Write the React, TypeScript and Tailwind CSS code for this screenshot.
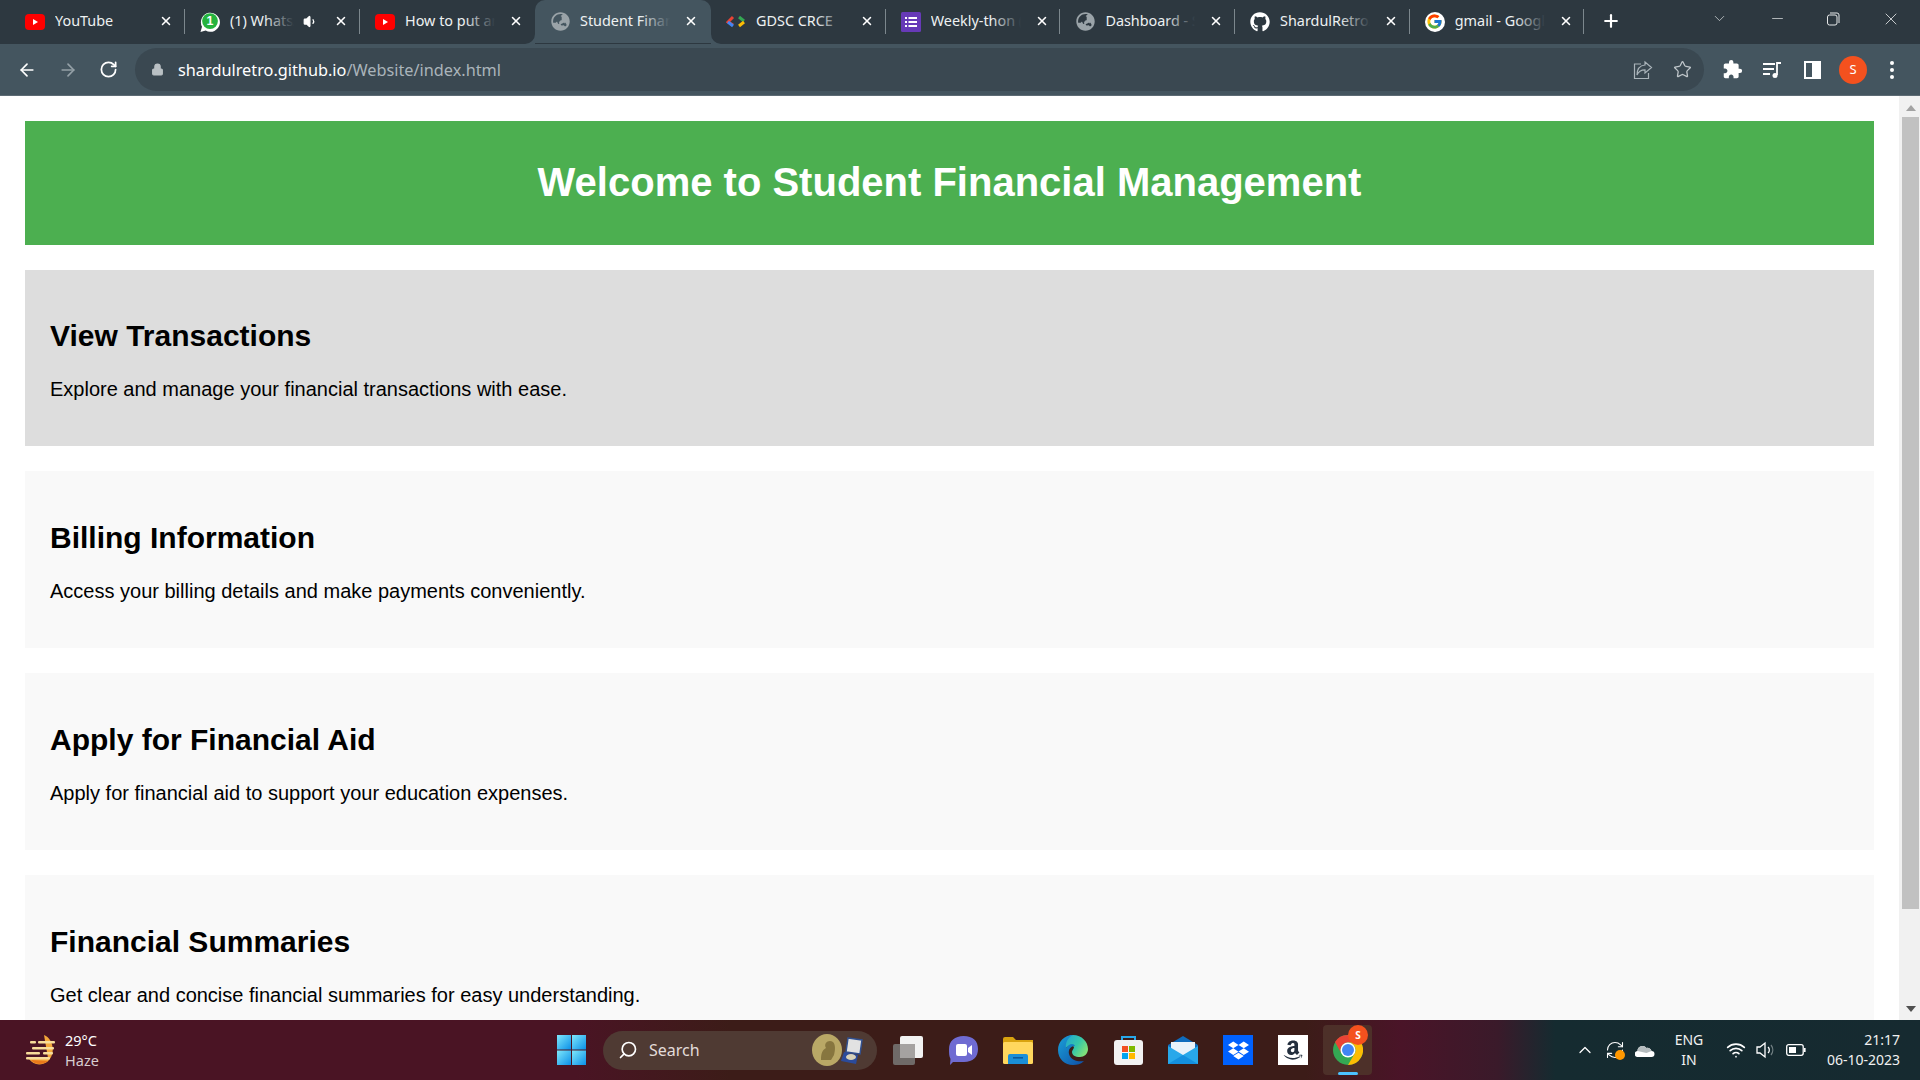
import React from "react";
import { ArrowLeft, ArrowRight, RotateCw, RefreshCw, Lock, Star, X, Plus, ChevronDown, ChevronUp, Minus, Search, Volume1, Wifi } from "lucide-react";
import { FaGithub, FaGlobeAsia, FaDropbox, FaAmazon } from "react-icons/fa";
import { FcGoogle } from "react-icons/fc";
import { MdExtension } from "react-icons/md";

const YT = () => (
  <svg width="20" height="16" viewBox="0 0 20 16"><rect width="20" height="16" rx="4" fill="#f00" /><path d="M8 5l5 3-5 3z" fill="#fff" /></svg>
);
const Wa = () => (
  <svg width="21" height="22" viewBox="0 0 21 22">
    <path d="M0.5 21.5l1.6-5.5A10 10 0 1 1 6 20z" fill="#fff" />
    <circle cx="10.5" cy="10" r="8.3" fill="#25b33e" />
    <text x="10.5" y="14.5" textAnchor="middle" fontSize="13" fontWeight="700" fill="#fff" fontFamily="Liberation Sans">1</text>
  </svg>
);
const Globe = () => <FaGlobeAsia size={19} color="#9aa3a8" />;
const Gdsc = () => (
  <svg width="20" height="14" viewBox="0 0 20 14">
    <path d="M7 2L2 7l5 3" fill="none" stroke="#ea4335" strokeWidth="3" />
    <path d="M2 7l5 4" fill="none" stroke="#4285f4" strokeWidth="3" />
    <path d="M13 2l5 4" fill="none" stroke="#34a853" strokeWidth="3" />
    <path d="M18 7l-5 4" fill="none" stroke="#fbbc04" strokeWidth="3" />
  </svg>
);
const Forms = () => (
  <svg width="20" height="20" viewBox="0 0 20 20">
    <rect width="20" height="20" rx="1.5" fill="#673ab7" />
    <g fill="#fff">
      <rect x="4" y="5" width="2" height="2" /><rect x="7.5" y="5" width="8.5" height="2" />
      <rect x="4" y="9" width="2" height="2" /><rect x="7.5" y="9" width="8.5" height="2" />
      <rect x="4" y="13" width="2" height="2" /><rect x="7.5" y="13" width="8.5" height="2" />
    </g>
  </svg>
);
const GoogleG = () => (
  <span className="flex h-[20px] w-[20px] items-center justify-center rounded-full bg-white"><FcGoogle size={17} /></span>
);

type TabT = { icon: React.ReactNode; title: string; speaker?: boolean; active?: boolean };
const tabs: TabT[] = [
  { icon: <YT />, title: "YouTube" },
  { icon: <Wa />, title: "(1) WhatsApp", speaker: true },
  { icon: <YT />, title: "How to put an image" },
  { icon: <Globe />, title: "Student Financial", active: true },
  { icon: <Gdsc />, title: "GDSC CRCE" },
  { icon: <Forms />, title: "Weekly-thon (Week" },
  { icon: <Globe />, title: "Dashboard - Student" },
  { icon: <FaGithub size={20} color="#fff" />, title: "ShardulRetro/Website" },
  { icon: <GoogleG />, title: "gmail - Google Search" },
];

function Tab({ t, i }: { t: TabT; i: number }) {
  const sep = !t.active && i !== 2;
  const fade = t.active ? "to-[#44555f]" : "to-[#2d3840]";
  return (
    <div className={`relative flex h-[43px] shrink-0 items-center pl-[15px] ${t.active ? "w-[176px] rounded-t-[10px] bg-[#44555f]" : i < 3 ? "w-[175px]" : "w-[174.7px]"}`}>
      {t.active && (
        <>
          <svg width="10" height="10" viewBox="0 0 10 10" className="absolute bottom-[-1px] left-[-10px]"><path d="M10 0v10H0a10 10 0 0 0 10-10z" fill="#44555f" /></svg>
          <svg width="10" height="10" viewBox="0 0 10 10" className="absolute bottom-[-1px] right-[-10px]"><path d="M0 0v10h10A10 10 0 0 1 0 0z" fill="#44555f" /></svg>
        </>
      )}
      <span className="flex w-[20px] shrink-0 items-center justify-center">{t.icon}</span>
      <span className={`relative ml-[10px] -mt-[2px] overflow-hidden whitespace-nowrap text-[14.4px] leading-[20px] text-[#eef1f2] ${t.speaker ? "w-[64px]" : "w-[90px]"}`}>
        {t.title}
        <span className={`absolute inset-y-0 right-0 w-[30px] bg-gradient-to-r from-transparent ${fade}`} />
      </span>
      {t.speaker && <Volume1 size={15} className="ml-[9px] shrink-0 text-white" fill="#fff" />}
      <X size={14} strokeWidth={2.6} className="absolute left-[149px] top-[14px] shrink-0 text-white" />
      {sep && <span className="absolute right-0 top-[9px] h-[25px] w-px bg-[#7c878d]" />}
    </div>
  );
}

const Windows = () => (
  <svg width="29" height="30" viewBox="0 0 29 30">
    <defs><linearGradient id="wg" x1="0" y1="0" x2="1" y2="1"><stop offset="0" stopColor="#7fe8fb" /><stop offset="1" stopColor="#0a8fe8" /></linearGradient></defs>
    <rect x="0" y="0" width="14" height="14.5" fill="url(#wg)" /><rect x="15" y="0" width="14" height="14.5" fill="url(#wg)" />
    <rect x="0" y="15.5" width="14" height="14.5" fill="url(#wg)" /><rect x="15" y="15.5" width="14" height="14.5" fill="url(#wg)" />
  </svg>
);
const Weather = () => (
  <svg width="32" height="30" viewBox="0 0 32 30">
    <path d="M19 0c10 4 12 20 3 27-6 4-14 3-18-3h6l13-1z" fill="#f3a73b" />
    <path d="M6 25c4 5 12 5 17 1l-17-1z" fill="#e9791b" />
    <g fill="#f7dc9a"><rect x="5" y="6" width="6" height="2.4" rx="1" /><rect x="13" y="6" width="17" height="2.4" rx="1" /><rect x="7" y="12" width="22" height="2.4" rx="1" /><rect x="1" y="17" width="14" height="2.4" rx="1" /><rect x="18" y="17" width="10" height="2.4" rx="1" /><rect x="1" y="22" width="24" height="2.4" rx="1" /></g>
  </svg>
);
const TaskView = () => (
  <svg width="30" height="29" viewBox="0 0 30 29"><rect x="0" y="8" width="22" height="21" rx="2" fill="#6f6a68" /><rect x="7" y="0" width="23" height="22" rx="2" fill="#f2f2f2" /><rect x="7" y="8" width="15" height="14" fill="#a5a2a1" /></svg>
);
const Teams = () => (
  <svg width="29" height="30" viewBox="0 0 29 30">
    <path d="M14.5 1C24 1 29 6 29 14c0 8-5 13-14 13H4l-3 3 .5-6C0 21 0 18 0 14 0 6 6 1 14.5 1z" fill="#6f6bd2" />
    <rect x="7" y="9" width="11" height="12" rx="2" fill="#fff" /><path d="M19 13l4-3v10l-4-3z" fill="#fff" />
  </svg>
);
const Folder = () => (
  <svg width="30" height="27" viewBox="0 0 30 27"><path d="M0 2a2 2 0 0 1 2-2h8l3 3h17v5H0z" fill="#d9a30f" /><rect y="5" width="30" height="22" rx="1.5" fill="#ffd75e" /><path d="M5 27v-8a2 2 0 0 1 2-2h16a2 2 0 0 1 2 2v8z" fill="#1a8fd8" /><rect x="10" y="20" width="10" height="1.6" fill="#0b5a9c" /></svg>
);
const Edge = () => (
  <svg width="30" height="30" viewBox="0 0 30 30">
    <defs>
      <linearGradient id="eg" x1="0" y1="0" x2="1" y2="0.6"><stop offset="0" stopColor="#1fa2d6" /><stop offset="0.6" stopColor="#36c7a8" /><stop offset="1" stopColor="#7fe07a" /></linearGradient>
      <linearGradient id="eb" x1="0" y1="0" x2="1" y2="1"><stop offset="0" stopColor="#1aa0d8" /><stop offset="1" stopColor="#0f4fa8" /></linearGradient>
    </defs>
    <path d="M15 0c9 0 15 7 15 14 0 5-4 8-8 8-5 0-8-2-8-5 0-2 2-3 2-5-1-2-6-2-9 2C5 8 9 0 15 0z" fill="url(#eg)" />
    <path d="M15 0C6 0 0 7 0 15c0 9 7 15 15 15 4 0 8-1 11-4-5 1-13 0-15-7-1-5 2-8 6-8-1-3-6-3-9 2C7 8 10 2 15 0z" fill="url(#eb)" />
  </svg>
);
const Store = () => (
  <svg width="29" height="30" viewBox="0 0 29 30">
    <path d="M8 6V2h13v4" fill="none" stroke="#28a8ea" strokeWidth="2" />
    <rect y="5" width="29" height="25" rx="3" fill="#f2f2f2" />
    <rect x="8" y="11" width="6" height="6" fill="#f25022" /><rect x="15" y="11" width="6" height="6" fill="#7fba00" />
    <rect x="8" y="18" width="6" height="6" fill="#00a4ef" /><rect x="15" y="18" width="6" height="6" fill="#ffb900" />
  </svg>
);
const Mail = () => (
  <svg width="30" height="28" viewBox="0 0 30 28">
    <path d="M15 0L30 9v19H0V9z" fill="#0f6cbd" /><path d="M3 6h24v9l-12 7L3 15z" fill="#e8f2fa" />
    <path d="M0 10l15 9 15-9v18H0z" fill="#28a8ea" /><path d="M0 28l15-9 15 9z" fill="#1490df" />
  </svg>
);

function TaskIcon({ children }: { children: React.ReactNode }) {
  return <div className="flex h-[30px] w-[30px] shrink-0 items-center justify-center">{children}</div>;
}

const Chrome = () => (
  <svg width="30" height="30" viewBox="0 0 30 30">
    <circle cx="15" cy="15" r="15" fill="#34a853" />
    <path d="M15 0a15 15 0 0 1 13 7.5H15a7.5 7.5 0 0 0-6.5 11.2L2 7a15 15 0 0 1 13-7z" fill="#ea4335" />
    <path d="M28 7.5A15 15 0 0 1 15 30l6.5-11.2A7.5 7.5 0 0 0 15 7.5z" fill="#fbbc04" />
    <circle cx="15" cy="15" r="7.5" fill="#fff" /><circle cx="15" cy="15" r="6" fill="#4285f4" />
  </svg>
);

const sections = [
  ["View Transactions", "Explore and manage your financial transactions with ease."],
  ["Billing Information", "Access your billing details and make payments conveniently."],
  ["Apply for Financial Aid", "Apply for financial aid to support your education expenses."],
  ["Financial Summaries", "Get clear and concise financial summaries for easy understanding."],
];

export default function App() {
  return (
    <div className="flex h-screen w-full flex-col overflow-hidden bg-white font-['Liberation_Sans',sans-serif]">
      {/* tab strip */}
      <div className="flex h-[44px] shrink-0 items-start bg-[#2d3840] pl-[10px] font-['Noto_Sans',sans-serif]">
        {tabs.map((t, i) => <Tab key={i} t={t} i={i} />)}
        <Plus size={20} strokeWidth={2.6} className="ml-[17px] mt-[11px] text-white" />
        <ChevronDown size={17} strokeWidth={1} className="ml-[90px] mt-[10px] text-[#dfe2e4]" />
        <Minus size={17} strokeWidth={1} className="ml-[41px] mt-[10px] text-[#e6e8e9]" />
        <svg width="14" height="14" viewBox="0 0 14 14" className="ml-[40px] mt-[12px]" fill="none" stroke="#e6e8e9"><rect x="1.5" y="3" width="9.5" height="10" rx="2" /><path d="M4 1h7a2 2 0 0 1 2 2v8" /></svg>
        <X size={20} strokeWidth={1} className="ml-[41px] mt-[9px] text-[#e6e8e9]" />
      </div>
      {/* toolbar */}
      <div className="flex h-[52px] shrink-0 items-center border-b border-b-[#5d6b74] bg-[#44555f] pl-[17px]">
        <ArrowLeft size={20} strokeWidth={2} className="text-white" />
        <ArrowRight size={20} strokeWidth={2} className="ml-[21px] text-[#94a0a7]" />
        <RotateCw size={19} strokeWidth={2.2} className="ml-[21px] text-white" />
        <div className="ml-[17px] flex h-[43px] w-[1569px] items-center rounded-full bg-[#3a4851] pl-[16px]">
          <Lock size={13} className="text-[#b9c0c4]" fill="#b9c0c4" />
          <span className="ml-[14px] text-[16.3px] font-['Noto_Sans',sans-serif] leading-[24px] text-white">
            shardulretro.github.io<span className="text-[#aab4ba]">/Website/index.html</span>
          </span>
          <svg width="20" height="20" viewBox="0 0 20 20" className="ml-auto" fill="none" stroke="#aab4ba" strokeWidth="1.2">
            <path d="M8 4H1.5v14.5h14V13" /><path d="M12 2l6.5 5.5L12 13V9.8C8 9.8 5.5 11 4 15c0-6 3-9.5 8-10z" />
          </svg>
          <Star size={19} strokeWidth={1.6} className="ml-[20px] mr-[12px] text-[#c0c7cb]" />
        </div>
        <MdExtension size={21} color="#fff" className="ml-[18px]" />
        <svg width="20" height="18" viewBox="0 0 20 18" className="ml-[19px]" fill="none" stroke="#fff" strokeWidth="1.8"><path d="M1 3h12M1 8h11M1 13h7M15 14V2h4" /><circle cx="13" cy="14.5" r="2.5" fill="#fff" stroke="none" /></svg>
        <div className="ml-[22px] flex h-[18px] w-[17px] justify-end border-[2.5px] border-white"><span className="h-full w-[7px] bg-white" /></div>
        <div className="ml-[18px] flex h-[28px] w-[28px] items-center justify-center rounded-full bg-[#f4511e] text-[13px] font-['Noto_Sans',sans-serif] text-white">S</div>
        <div className="ml-[23px] flex flex-col gap-[3px]">
          <span className="h-[4px] w-[4px] rounded-full bg-white" />
          <span className="h-[4px] w-[4px] rounded-full bg-white" />
          <span className="h-[4px] w-[4px] rounded-full bg-white" />
        </div>
      </div>
      {/* page */}
      <div className="flex min-h-0 flex-1">
        <div className="flex-1 overflow-hidden px-[25px] pt-[25px] text-black">
          <header className="bg-[#4caf50] pt-[38px] pb-[39.6px] text-center">
            <h1 className="text-[40px] font-bold leading-[46px] text-white">Welcome to Student Financial Management</h1>
          </header>
          {sections.map(([h, p], i) => (
            <section key={h} className={`mt-[25px] h-[176.8px] shrink-0 px-[25px] pt-[48.6px] ${i === 0 ? "bg-[#dddddd]" : "bg-[#f9f9f9]"}`}>
              <h2 className="text-[30px] font-bold leading-[35px]">{h}</h2>
              <p className="mt-[25px] text-[20px] leading-[23px]">{p}</p>
            </section>
          ))}
        </div>
        <div className="flex w-[21px] shrink-0 flex-col items-center bg-[#f1f1f1] pl-[2px]">
          <span className="mt-[9px] h-0 w-0 border-x-[5px] border-b-[6px] border-x-transparent border-b-[#a3a3a3]" />
          <span className="mt-[6px] h-[792px] w-[17px] bg-[#c1c1c1]" />
          <span className="mt-auto mb-[8px] h-0 w-0 border-x-[5px] border-t-[6px] border-x-transparent border-t-[#505050]" />
        </div>
      </div>
      {/* taskbar */}
      <div className="flex h-[60px] shrink-0 items-center bg-[linear-gradient(90deg,#4a1424_0%,#4a1424_30%,#3c1c18_38%,#3c1c18_68%,#4a1428_73%,#3a1a2a_78%,#152b30_81%,#162a30_100%)] pl-[25px] text-white font-['Noto_Sans',sans-serif]">
        <Weather />
        <div className="ml-[8px] flex w-[60px] flex-col text-[14.5px] leading-[20px]">
          <span>29°C</span>
          <span className="text-[#d8cdd0]">Haze</span>
        </div>
        <div className="ml-[432px]"><Windows /></div>
        <div className="ml-[17px] flex h-[39px] w-[274px] items-center rounded-full bg-[#4f3a33] pl-[15px]">
          <Search size={20} strokeWidth={2} className="-scale-x-100 text-white" />
          <span className="ml-[11px] text-[16px] text-[#e3dcd9]">Search</span>
          <span className="relative ml-auto mr-[12px] flex items-center">
            <svg width="54" height="32" viewBox="0 0 54 32">
              <ellipse cx="16" cy="16" rx="15" ry="16" fill="#b9a866" /><path d="M10 26c0-8 2-10 5-12-3-5 3-9 7-6 3 3 2 9 1 13l-3 5z" fill="#87763f" />
              <path d="M37 4l14 2-2 14-14-2z" fill="#e2e2e2" stroke="#32508f" strokeWidth="1.5" /><path d="M33 18l14 3-2 9-15-3z" fill="#2b4b9b" /><ellipse cx="40" cy="23" rx="5" ry="3" fill="#d9d2b8" />
            </svg>
          </span>
        </div>
        <div className="ml-[16px] flex items-center gap-[25px]">
          <TaskIcon><TaskView /></TaskIcon>
          <TaskIcon><Teams /></TaskIcon>
          <TaskIcon><Folder /></TaskIcon>
          <TaskIcon><Edge /></TaskIcon>
          <TaskIcon><Store /></TaskIcon>
          <TaskIcon><Mail /></TaskIcon>
          <TaskIcon><span className="flex h-[30px] w-[30px] items-center justify-center bg-[#0061fe]"><FaDropbox size={21} color="#fff" /></span></TaskIcon>
          <TaskIcon><span className="flex h-[30px] w-[30px] items-center justify-center bg-white"><FaAmazon size={22} color="#232f3e" /></span></TaskIcon>
          <div className="relative h-[30px] w-[30px]">
            <span className="absolute -left-[10px] -top-[10px] h-[50px] w-[49px] rounded-[4px] bg-[#4d3029]" />
            <span className="absolute left-0 top-0"><Chrome /></span>
            <span className="absolute -right-[5px] -top-[10px] flex h-[20px] w-[20px] items-center justify-center rounded-full bg-[#f4511e] text-[10px] font-bold">S</span>
            <span className="absolute bottom-[-10px] left-[5px] h-[3px] w-[20px] rounded-full bg-[#4cc2ff]" />
          </div>
        </div>
        <div className="ml-auto flex items-center pr-[20px]">
          <ChevronUp size={20} strokeWidth={1.5} className="text-white" />
          <span className="relative ml-[10px] flex h-[20px] w-[20px] items-center justify-center">
            <RefreshCw size={20} strokeWidth={1.3} className="text-white" />
            <span className="absolute bottom-0 right-0 h-[10px] w-[10px] rounded-full bg-[#ff9800]" />
          </span>
          <svg width="20" height="13" viewBox="0 0 20 13" className="ml-[10px]"><path d="M3 13a3 3 0 0 1-.5-6 5 5 0 0 1 9-3 4 4 0 0 1 5 3 3 3 0 0 1 0 6z" fill="#fff" /><path d="M2.5 7a5 5 0 0 1 9-3 4 4 0 0 1 5 3l-5 2z" fill="#b5bcbe" /></svg>
          <div className="ml-[19px] flex w-[30px] flex-col items-center text-[14px] leading-[20px] text-[#f1f1f1]">
            <span>ENG</span><span>IN</span>
          </div>
          <Wifi size={20} strokeWidth={2} className="ml-[22px] text-white" />
          <svg width="20" height="20" viewBox="0 0 20 20" className="ml-[10px]" fill="none" stroke="#fff" strokeWidth="1.3"><path d="M1 7h3l5-4v14l-5-4H1z" /><path d="M12 7a4 4 0 0 1 0 6" /><path d="M15 5a8 8 0 0 1 0 10" stroke="#6f7d80" /></svg>
          <svg width="20" height="12" viewBox="0 0 20 12" className="ml-[10px]" fill="none"><rect x="0.7" y="0.7" width="16.5" height="10.6" rx="2" stroke="#fff" strokeWidth="1.3" /><rect x="3" y="3" width="7" height="6" fill="#fff" /><rect x="18" y="4" width="1.6" height="4" fill="#fff" /></svg>
          <div className="ml-[20px] flex w-[74px] flex-col items-end text-[14px] leading-[20px] text-[#f1f1f1]">
            <span>21:17</span><span>06-10-2023</span>
          </div>
        </div>
      </div>
    </div>
  );
}
